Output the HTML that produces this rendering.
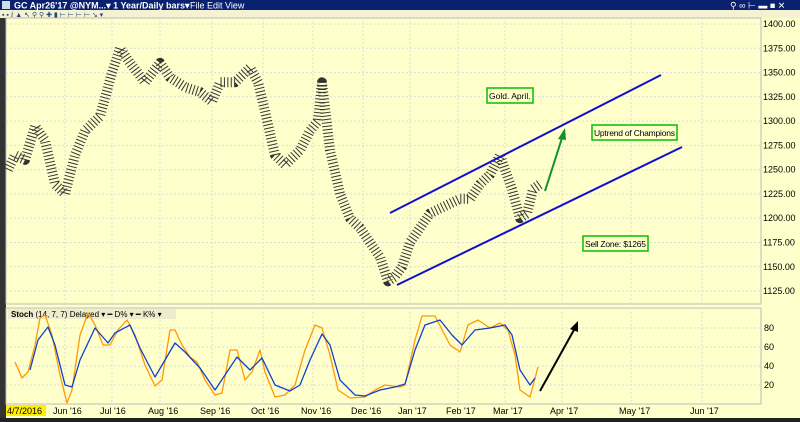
<!DOCTYPE html>
<html><head><meta charset="utf-8"><style>
body{margin:0;width:800px;height:422px;overflow:hidden;background:#ffffcc;font-family:"Liberation Sans",sans-serif}
svg{display:block}
</style></head><body>
<svg width="800" height="422" xmlns="http://www.w3.org/2000/svg" font-family="Liberation Sans, sans-serif">
<rect width="800" height="422" fill="#ffffcc"/>
<rect x="0" y="0" width="800" height="10" fill="#0a2170"/>
<rect x="2" y="1" width="8" height="8" fill="#cde"/>
<text x="14" y="8.5" font-size="9" font-weight="bold" fill="#fff">GC Apr26'17 @NYM...▾  1 Year/Daily bars▾</text>
<text x="190" y="8.5" font-size="9" fill="#fff">File  Edit  View</text>
<text x="730" y="8.5" font-size="9" fill="#fff">⚲ ∞ ⊢ ▬ ■ ✕</text>
<rect x="0" y="10" width="800" height="8" fill="#f4f2d0"/>
<text x="2" y="17" font-size="7" fill="#247">▪ ▪ ⅈ ▲ ↖ ⚲ ⚲ ✚ ▮ ⊢ ⊢ ⊢ ⊢ ↘ ▾</text>
<rect x="0" y="18" width="6" height="400" fill="#333"/>
<rect x="6" y="18" width="755" height="286" fill="#ffffcc" stroke="#bbb" stroke-width="1"/>
<rect x="6" y="308" width="755" height="96" fill="#ffffcc" stroke="#bbb" stroke-width="1"/>
<g stroke="#ddd" stroke-dasharray="2,2" stroke-width="1">
<path d="M6 24H761M6 48.3H761M6 72.6H761M6 96.8H761M6 121.1H761M6 145.4H761M6 169.7H761M6 194H761M6 218.2H761M6 242.5H761M6 266.8H761M6 291H761"/>
<path d="M6 328H761M6 347H761M6 366H761M6 385H761"/>
<path d="M65 18V304M112 18V304M160 18V304M212 18V304M263 18V304M313 18V304M363 18V304M410 18V304M458 18V304M505 18V304M562 18V304M631 18V304M702 18V304"/>
<path d="M65 308V404M112 308V404M160 308V404M212 308V404M263 308V404M313 308V404M363 308V404M410 308V404M458 308V404M505 308V404M562 308V404M631 308V404M702 308V404"/>
</g>
<g font-size="9" fill="#000">
<text x="763" y="27">1400.00</text><text x="763" y="51.3">1375.00</text><text x="763" y="75.6">1350.00</text><text x="763" y="99.8">1325.00</text><text x="763" y="124.1">1300.00</text><text x="763" y="148.4">1275.00</text><text x="763" y="172.7">1250.00</text><text x="763" y="197">1225.00</text><text x="763" y="221.2">1200.00</text><text x="763" y="245.5">1175.00</text><text x="763" y="269.8">1150.00</text><text x="763" y="294">1125.00</text>
<text x="764" y="331">80</text><text x="764" y="350">60</text><text x="764" y="369">40</text><text x="764" y="388">20</text>
<text x="53" y="414">Jun '16</text><text x="100" y="414">Jul '16</text><text x="148" y="414">Aug '16</text><text x="200" y="414">Sep '16</text><text x="251" y="414">Oct '16</text><text x="301" y="414">Nov '16</text><text x="351" y="414">Dec '16</text><text x="398" y="414">Jan '17</text><text x="446" y="414">Feb '17</text><text x="493" y="414">Mar '17</text><text x="550" y="414">Apr '17</text><text x="619" y="414">May '17</text><text x="690" y="414">Jun '17</text>
</g>
<rect x="6" y="405" width="40" height="11" fill="#ffee00"/>
<text x="7" y="414" font-size="9" fill="#000">4/7/2016</text>
<rect x="0" y="418" width="800" height="4" fill="#222"/>
<polyline fill="none" stroke="#333" stroke-width="10" stroke-linejoin="round" stroke-dasharray="1 2.4" points="8,169.7 15,155.1 25,159.9 35,126 45,140.5 55,184.2 65,193.9 75,155.1 85,130.8 100,116.2 112,72.6 120,48.3 130,62.8 145,82.3 160,62.8 170,77.4 185,87.1 200,92 212,101.7 220,82.3 235,82.3 250,67.7 258,82.3 265,111.4 275,155.1 285,164.8 300,150.2 310,130.8 318,121.1 322,82.3 330,150.2 340,193.9 350,218.2 360,227.9 370,242.5 380,257 388,281.3 395,276.5 402,266.8 410,242.5 420,227.9 430,213.4 440,208.5 450,203.6 460,198.8 470,198.8 480,184.2 490,174.5 500,155.1 505,169.7 512,189.1 520,218.2 527,213.4 533,189.1 540,184.2"/>
<line x1="390" y1="213" x2="661" y2="75" stroke="#1010d0" stroke-width="2"/>
<line x1="397" y1="285" x2="682" y2="147" stroke="#1010d0" stroke-width="2"/>
<line x1="545" y1="191" x2="562" y2="138" stroke="#109030" stroke-width="2"/>
<polygon points="565,128 558,139 566,140" fill="#109030"/>
<rect x="487" y="88" width="46" height="15" fill="#ffffcc" stroke="#00c000" stroke-width="1.5"/>
<text x="489" y="99" font-size="8.5">Gold. April.</text>
<rect x="592" y="125" width="85" height="15" fill="#ffffcc" stroke="#00c000" stroke-width="1.5"/>
<text x="594" y="136" font-size="8.5" textLength="81">Uptrend of Champions</text>
<rect x="583" y="236" width="65" height="15" fill="#ffffcc" stroke="#00c000" stroke-width="1.5"/>
<text x="585" y="247" font-size="8.5" textLength="61">Sell Zone: $1265</text>
<rect x="8" y="309" width="168" height="10" fill="#eeeccc"/>
<text x="11" y="317" font-size="8"><tspan font-weight="bold">Stoch</tspan>  (14, 7, 7) Delayed ▾  ━ D% ▾  ━ K% ▾</text>
<polyline fill="none" stroke="#ff9900" stroke-width="1.3" stroke-linejoin="round" points="15,362 22,378 28,372 35,345 40,318 45,315 52,335 60,375 67,403 72,390 80,335 88,313 95,325 103,345 110,345 118,330 127,320 135,335 145,365 155,386 162,380 170,330 175,330 182,345 190,357 197,362 205,380 215,395 222,393 230,350 237,350 245,380 252,372 260,350 265,372 275,397 285,395 295,385 305,350 315,325 322,328 330,355 338,390 350,398 365,397 375,390 385,385 400,387 405,385 415,340 422,316 435,316 450,345 460,352 468,325 478,320 490,328 500,323 508,330 515,355 520,390 530,397 538,367"/>
<polyline fill="none" stroke="#1040d0" stroke-width="1.3" stroke-linejoin="round" points="30,370 38,340 48,327 55,345 65,385 72,387 80,360 95,328 108,343 115,333 130,325 140,348 155,377 165,360 175,343 185,352 200,368 215,390 225,375 237,357 250,370 262,358 275,385 290,391 300,385 310,360 322,334 330,345 340,380 355,395 365,396 380,390 395,387 405,384 415,350 425,325 440,320 452,335 462,345 475,330 490,328 505,325 512,335 520,370 530,385 535,378"/>
<line x1="540" y1="391" x2="575" y2="328" stroke="#000" stroke-width="2"/>
<polygon points="578,321 570,329 578,332" fill="#000"/>
</svg>
</body></html>
